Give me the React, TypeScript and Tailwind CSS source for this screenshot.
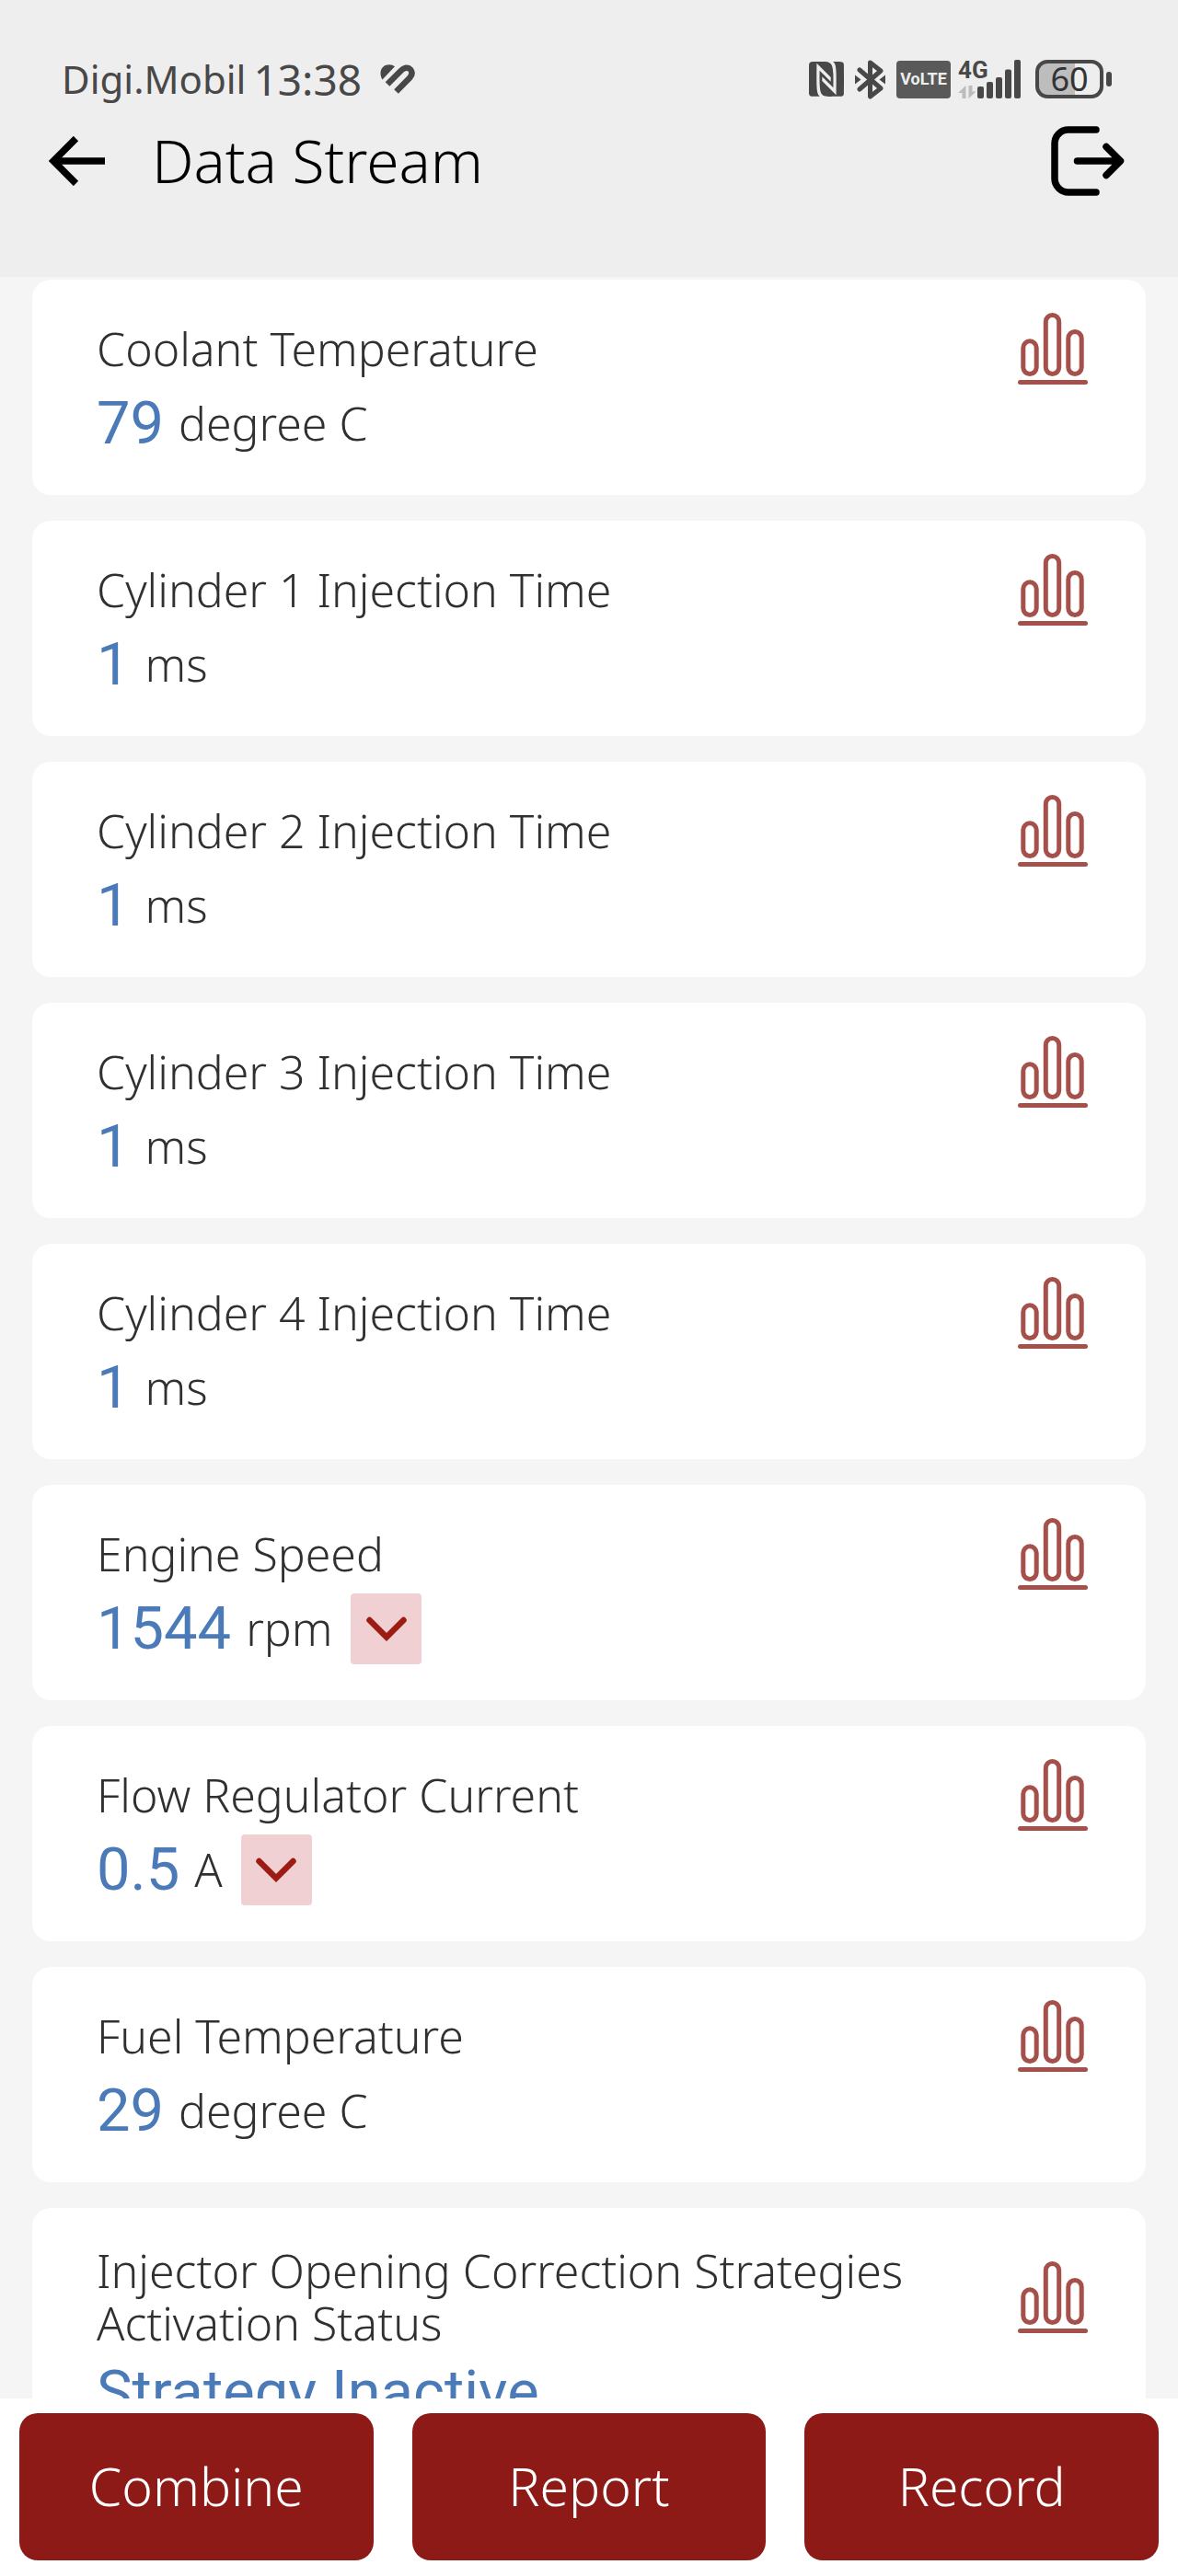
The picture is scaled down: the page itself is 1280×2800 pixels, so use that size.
import { SiNfc } from "react-icons/si";

type Reading = {
  name: string;
  value: string;
  unit?: string;
  expandable?: boolean;
};

const readings: Reading[] = [
  { name: "Coolant Temperature", value: "79", unit: "degree C" },
  { name: "Cylinder 1 Injection Time", value: "1", unit: "ms" },
  { name: "Cylinder 2 Injection Time", value: "1", unit: "ms" },
  { name: "Cylinder 3 Injection Time", value: "1", unit: "ms" },
  { name: "Cylinder 4 Injection Time", value: "1", unit: "ms" },
  { name: "Engine Speed", value: "1544", unit: "rpm", expandable: true },
  { name: "Flow Regulator Current", value: "0.5", unit: "A", expandable: true },
  { name: "Fuel Temperature", value: "29", unit: "degree C" },
  {
    name: "Injector Opening Correction Strategies Activation Status",
    value: "Strategy Inactive",
  },
];

const HeartIcon = () => (
  <svg viewBox="0 0 38 32" className="w-[38px] h-8" fill="none">
    <path d="M2.5 16.5C-1 11 0 3 6.500 .8C10 -.4 13.500 .3 16 2.200Z" fill="#484848" />
    <path
      d="M8 21.500L23 6.500C26 3.500 30.500 2.500 33 5.500C35.500 8.500 34.500 12 32 14.800L17.500 29.500"
      stroke="#484848"
      strokeWidth="6.500"
    />
  </svg>
);

const BluetoothIcon = () => (
  <svg viewBox="0 0 33 43" className="w-[33px] h-[43px]" fill="none">
    <path
      d="M5 11L28 31L16.500 40V3L28 12L5 32"
      stroke="#484848"
      strokeWidth="5"
      strokeLinecap="round"
      strokeLinejoin="round"
    />
    <path d="M0 16.500L6.500 21.500L0 26.500ZM33 16.500L26.500 21.500L33 26.500Z" fill="#484848" />
  </svg>
);

const SignalIcon = () => (
  <svg viewBox="0 0 68 42" className="w-[68px] h-[42px] overflow-visible" fill="#484848">
    <text x="0" y="20" fontSize="26" fontWeight="700" fontFamily="Roboto, sans-serif">
      4G
    </text>
    <path d="M8.500 28V42H4.500V36H0ZM11.500 28V42L19.500 34.500H15.500V28Z" fill="#bcbcbc" />
    <rect x="21" y="29" width="7" height="13" rx="2" />
    <rect x="31" y="24" width="7" height="18" rx="2" />
    <rect x="41" y="19" width="7" height="23" rx="2" />
    <rect x="51" y="10.500" width="7" height="31.500" rx="2" />
    <rect x="61" y="0" width="7" height="42" rx="2" />
  </svg>
);

const BatteryIcon = () => (
  <svg viewBox="0 0 83 42" className="w-[83px] h-[42px] overflow-visible">
    <path d="M13 2H43V40H13A11 11 0 0 1 2 29V13A11 11 0 0 1 13 2Z" fill="#bdbdbd" />
    <rect x="2" y="2" width="70" height="38" rx="11" fill="none" stroke="#484848" strokeWidth="4" />
    <rect x="77" y="13" width="6" height="16" rx="3" fill="#484848" />
    <text
      x="37"
      y="34"
      textAnchor="middle"
      fontSize="36"
      fontWeight="400"
      fontFamily="Noto Sans, sans-serif"
      fill="#333333"
    >
      60
    </text>
  </svg>
);

const BackIcon = () => (
  <svg viewBox="0 0 61 54" className="w-[61px] h-[54px]" fill="none" stroke="#000" strokeWidth="7.500">
    <path d="M29.500 2.500L5 27L29.500 51.500M5 27H61" />
  </svg>
);

const ExitIcon = () => (
  <svg
    viewBox="0 0 80 76"
    className="w-20 h-[76px]"
    fill="none"
    stroke="#000"
    strokeWidth="7.500"
    strokeLinecap="round"
    strokeLinejoin="round"
  >
    <path d="M49 4H19A15 15 0 0 0 4 19V57A15 15 0 0 0 19 72H49" />
    <path d="M28.500 38H75M60 22.500L75.500 38L60 53.500" />
  </svg>
);

const ChartIcon = () => (
  <svg viewBox="0 0 76 78" className="w-[76px] h-[78px]" fill="none" stroke="#a5504a" strokeWidth="5">
    <rect x="5.800" y="30.800" width="14.400" height="35.700" rx="7.200" />
    <rect x="30.300" y="2.500" width="14.400" height="64" rx="7.200" />
    <rect x="54.800" y="20.500" width="14.400" height="46" rx="7.200" />
    <path d="M2.500 75.500H73.500" strokeLinecap="round" />
  </svg>
);

const ChevronIcon = () => (
  <svg viewBox="0 0 44 28" className="w-11 h-7" fill="none" stroke="#9c1c14" strokeWidth="6.500">
    <path d="M3.500 4L22 22.500L40.500 4" strokeLinecap="round" />
  </svg>
);

const StatusBar = () => {
  return (
    <div className="flex items-center justify-between h-[60px] text-[#484848]">
      <div className="flex items-center">
        <span className="text-[42px] leading-[60px]">Digi.Mobil</span>
        <span className="text-[46px] leading-[60px] ml-2">13:38</span>
        <span className="ml-5">
          <HeartIcon />
        </span>
      </div>
      <div className="flex items-center gap-3">
        <SiNfc className="size-[38px]" />
        <BluetoothIcon />
        <span className="flex items-center justify-center w-[59px] h-[41px] rounded bg-[#595959] text-[#eeeeee] font-[Roboto,sans-serif] font-bold text-lg">
          VoLTE
        </span>
        <div className="flex items-center gap-4 -ml-1">
          <SignalIcon />
          <BatteryIcon />
        </div>
      </div>
    </div>
  );
};

const ReadingCard = ({ name, value, unit, expandable }: Reading) => {
  return (
    <li className="shrink-0 bg-white rounded-[20px] pt-9 pb-[39px] pl-[70px] pr-[63px]">
      <div className="flex items-center justify-between min-h-[78px]">
        <h2 className="py-1 text-[50px] leading-[57px] font-[350]">{name}</h2>
        <button aria-label={`Chart of ${name}`} className="shrink-0">
          <ChartIcon />
        </button>
      </div>
      <div className="flex items-center h-[77px] mt-1">
        <span className="font-[Roboto,sans-serif] text-[65px] leading-[77px] text-[#4a7ab8]">{value}</span>
        {unit && <span className="ml-4 text-[50px] leading-[77px] font-[350]">{unit}</span>}
        {expandable && (
          <button
            aria-label={`More about ${name}`}
            className="flex items-center justify-center size-[77px] ml-5 rounded bg-[#f0d0d2]"
          >
            <ChevronIcon />
          </button>
        )}
      </div>
    </li>
  );
};

const App = () => {
  return (
    <div className="flex flex-col h-screen bg-[#f5f5f5] text-[#303030] font-['Noto_Sans',sans-serif]">
      <header className="shrink-0 bg-[#eeeeee] pt-14 pb-[88px]">
        <div className="pl-[67px] pr-[72px]">
          <StatusBar />
        </div>
        <div className="flex items-center h-[76px] mt-[21px] pl-[53px] pr-[58px] text-black">
          <button aria-label="Back">
            <BackIcon />
          </button>
          <h1 className="grow ml-[51px] text-[64px] leading-[76px] font-[350]">Data Stream</h1>
          <button aria-label="Exit">
            <ExitIcon />
          </button>
        </div>
      </header>

      <main className="grow min-h-0 overflow-hidden px-[35px] pt-[3px]">
        <ul className="flex flex-col gap-7">
          {readings.map((reading) => (
            <ReadingCard key={reading.name} {...reading} />
          ))}
        </ul>
      </main>

      <footer className="shrink-0 grid grid-cols-3 gap-[42px] bg-white px-[21px] pt-4 pb-[17px]">
        {["Combine", "Report", "Record"].map((label) => (
          <button key={label} className="h-40 rounded-[20px] bg-[#8d1a16] text-white text-[57px] font-[350]">
            {label}
          </button>
        ))}
      </footer>
    </div>
  );
};

export default App;
